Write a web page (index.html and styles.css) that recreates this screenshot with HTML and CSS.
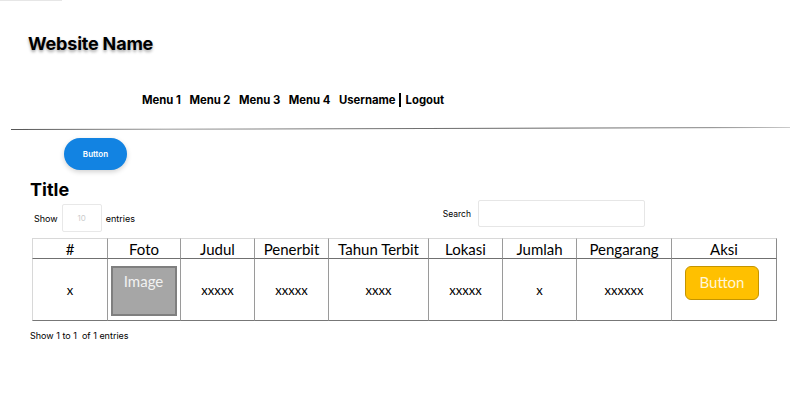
FILE: index.html
```html
<!DOCTYPE html>
<html>
<head>
<meta charset="utf-8">
<link rel="stylesheet" href="styles.css">
</head>
<body>
<div class="topline"></div>
<header class="site-header">
  <h1 class="brand">Website Name</h1>
  <nav class="nav">
    <span>Menu 1</span><span>Menu 2</span><span>Menu 3</span><span>Menu 4</span><span class="user">Username</span><span class="sep"></span><span>Logout</span>
  </nav>
</header>
<hr class="divider">
<main class="content">
  <div class="btn-row"><button class="btn-blue">Button</button></div>
  <h2 class="title">Title</h2>
  <div class="controls">
    <div class="show">Show <span class="len-input">10</span> entries</div>
    <div class="search">Search <span class="search-input"></span></div>
  </div>
  <div class="data" role="table">
    <div class="th first">#</div>
    <div class="th">Foto</div>
    <div class="th">Judul</div>
    <div class="th">Penerbit</div>
    <div class="th">Tahun Terbit</div>
    <div class="th">Lokasi</div>
    <div class="th">Jumlah</div>
    <div class="th">Pengarang</div>
    <div class="th last">Aksi</div>
    <div class="td first">x</div>
    <div class="td"><div class="img-ph">Image</div></div>
    <div class="td">xxxxx</div>
    <div class="td">xxxxx</div>
    <div class="td">xxxx</div>
    <div class="td">xxxxx</div>
    <div class="td">x</div>
    <div class="td">xxxxxx</div>
    <div class="td last"><div class="btn-yellow">Button</div></div>
  </div>
  <div class="info">Show 1 to 1&nbsp; of 1 entries</div>
</main>
</body>
</html>
```
FILE: styles.css
```css
html, body { margin: 0; padding: 0; background: #fff; }
body { font-family: Inter, "Liberation Sans", sans-serif; color: #000; width: 791px; height: 407px; overflow: hidden; position: relative; }
.topline { position: absolute; left: 0; top: 0; width: 62px; height: 1px; background: #e6e6e6; }
.site-header { padding: 33px 0 0 28px; }
.brand { margin: 0; font-size: 18px; font-weight: 700; letter-spacing: -0.2px; text-shadow: 0 2px 3px rgba(0,0,0,0.35); line-height: 22px; }
.nav { margin: 37px 0 0 114px; display: flex; align-items: center; font-size: 11.3px; font-weight: 700; height: 16px; }
.nav span { margin-right: 8.5px; }
.nav .user { margin-right: 3px; }
.nav .sep { width: 2px; height: 14px; background: #000; margin-right: 5px; }
.divider { margin: 20px 1px 0 11px; border: 0; height: 1px; background: linear-gradient(90deg, #555 0%, #999 20%, #777 40%, #666 70%, #888 90%, #ccc 100%); transform: rotate(-0.15deg); }
.content { padding: 0 14px 0 30px; }
.btn-row { padding: 9px 0 0 34px; }
.btn-blue { width: 63px; height: 32px; border: 0; border-radius: 16px; background: #1283e2; color: #fff; font-family: Inter, sans-serif; font-size: 8px; font-weight: 600; box-shadow: 0 2px 5px rgba(0,0,0,0.18); padding: 0; }
.title { margin: 9px 0 0 0; font-size: 18px; font-weight: 700; line-height: 22px; }
.controls { display: flex; justify-content: space-between; align-items: flex-start; margin-top: -3px; padding-right: 132px; }
.show { display: flex; align-items: center; font-size: 9px; padding-left: 4px; margin-top: 6px; }
.len-input { display: inline-flex; align-items: center; justify-content: center; width: 38px; height: 26px; border: 1px solid #e8e8e8; border-radius: 2px; margin: 0 4px 0 4px; color: #ccc; font-size: 8px; }
.search { display: flex; align-items: center; font-size: 8.5px; margin-top: 2px; }
.search-input { display: inline-block; width: 165px; height: 25px; border: 1px solid #e6e6e6; border-radius: 2px; margin-left: 7px; }
.data { margin: 6px 0 0 2px; display: grid; grid-template-columns: 75px 73px 74px 74px 100px 74px 74px 95px 106px; grid-template-rows: 21px 62px; font-family: Lato, "Open Sans", sans-serif; width: 745px; }
.th, .td { display: flex; align-items: center; justify-content: center; border-left: 1px solid #9a9a9a; box-sizing: border-box; }
.th { font-size: 15px; border-top: 1px solid #d8d8d8; border-bottom: 1px solid #707070; padding-top: 1px; }
.td { font-size: 13px; border-bottom: 1px solid #777; }
.first { border-left-color: #d8d8d8; }
.last { border-right: 1px solid #8a8a8a; }
.img-ph { width: 66px; height: 50px; box-sizing: border-box; margin-left: -1px; margin-top: 3px; background: #a6a6a6; border: 2px solid #7f7f7f; color: #f2f2f2; font-size: 15px; line-height: 26px; text-align: center; }
.btn-yellow { width: 74px; height: 34px; margin-left: -4px; margin-top: -14px; background: #ffc000; border: 1.5px solid #c49400; border-radius: 6px; color: #fff6d8; font-size: 15px; line-height: 31px; text-align: center; box-sizing: border-box; }
.info { margin-top: 9px; font-size: 9px; }
```
